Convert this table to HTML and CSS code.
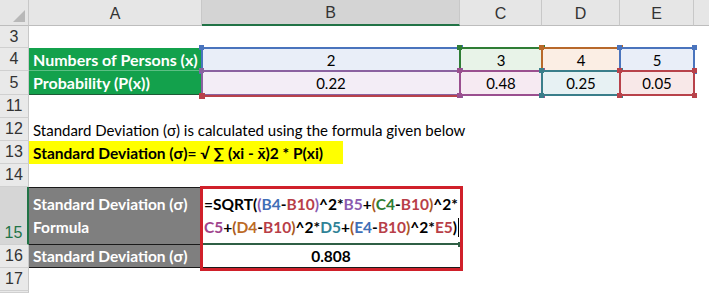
FILE: index.html
```html
<!DOCTYPE html>
<html>
<head>
<meta charset="utf-8">
<link rel="stylesheet" href="styles.css">
</head>
<body>
<div class="sheet">
  <div class="corner"><div class="tri"></div></div>
  <div class="ch">A</div>
  <div class="ch sel">B</div>
  <div class="ch">C</div>
  <div class="ch">D</div>
  <div class="ch">E</div>
  <div class="ch last"></div>

  <div class="rh">3</div>
  <div class="row-empty"></div>

  <div class="rh">4</div>
  <div class="cell green g4">Numbers of Persons (x)</div>
  <div class="cell ref r-b4">2<span class="frame"></span></div>
  <div class="cell ref r-c4">3<span class="frame"></span></div>
  <div class="cell ref r-d4">4<span class="frame"></span></div>
  <div class="cell ref r-e4">5<span class="frame"></span></div>
  <div class="cell"></div>

  <div class="rh">5</div>
  <div class="cell green g5">Probability (P(x))</div>
  <div class="cell ref r-b5">0.22<span class="frame"></span><span class="b10"></span></div>
  <div class="cell ref r-c5">0.48<span class="frame"></span></div>
  <div class="cell ref r-d5">0.25<span class="frame"></span></div>
  <div class="cell ref r-e5">0.05<span class="frame"></span></div>
  <div class="cell"></div>

  <div class="rh">11</div>
  <div class="row-empty"></div>

  <div class="rh">12</div>
  <div class="cell wide text12">Standard Deviation (σ) is calculated using the formula given below</div>

  <div class="rh">13</div>
  <div class="cell wide"><span class="yellow">Standard Deviation (σ)= √ ∑ (xi - x̄)2 * P(xi)</span></div>

  <div class="rh">14</div>
  <div class="row-empty"></div>

  <div class="rh sel r15">15</div>
  <div class="cell gray g15 r15">Standard Deviation (σ)<br>Formula</div>
  <div class="fbox">
    <div class="formula"><span class="k">=SQRT(</span><span class="pp">(</span><span class="cb">B4</span>-<span class="cr">B10</span><span class="pp">)</span>^2*<span class="cp">B5</span>+<span class="po">(</span><span class="cg">C4</span>-<span class="cr">B10</span><span class="po">)</span>^2*<br><span class="cm">C5</span>+<span class="po">(</span><span class="co">D4</span>-<span class="cr">B10</span><span class="po">)</span>^2*<span class="ct">D5</span>+<span class="po">(</span><span class="cb">E4</span>-<span class="cr">B10</span><span class="po">)</span>^2*<span class="cr">E5</span>)<span class="caret"></span><span class="handle"></span></div>
    <div class="result">0.808</div>
  </div>
  <div class="cell rest r15"></div>

  <div class="rh r16">16</div>
  <div class="cell gray g16 r16">Standard Deviation (σ)</div>
  <div class="cell rest r16"></div>

  <div class="rh r17">17</div>
  <div class="row-empty r17"></div>

  <div class="rh r18"></div>
  <div class="row-empty r18"></div>
</div>
</body>
</html>
```

FILE: styles.css
```css
html, body {
  margin: 0;
  padding: 0;
  background: #ffffff;
}
body {
  font-family: Lato, "Liberation Sans", "DejaVu Sans", sans-serif;
  font-size: 15px;
  color: #000;
  overflow: hidden;
}
.sheet {
  display: grid;
  grid-template-columns: 29px 173px 258px 82px 78px 74px 1fr;
  grid-template-rows: 26px 22px 23px 24px 23px 23px 23px 23px 58px 23px 23px 1fr;
  width: 709px;
  height: 293px;
}
.sheet > div {
  box-sizing: border-box;
  min-width: 0;
}
.r15 { grid-row: 9; }
.r16 { grid-row: 10; }
.r17 { grid-row: 11; }
.r18 { grid-row: 12; }
.rh.r15, .rh.r16, .rh.r17, .rh.r18 { grid-column: 1; }
.gray.r15, .gray.r16 { grid-column: 2; }
.rest { grid-column: 4 / -1; }
.corner {
  background: #e6e6e6;
  border-right: 1px solid #c8c8c8;
  border-bottom: 1px solid #bdbdbd;
  display: flex;
  justify-content: flex-end;
  align-items: flex-end;
  padding: 0 3px 3px 0;
}
.tri {
  width: 12px;
  height: 12px;
  background: #b8b8b8;
  clip-path: polygon(100% 0, 100% 100%, 0 100%);
}
.ch {
  background: #e6e6e6;
  border-right: 1px solid #c8c8c8;
  border-bottom: 1px solid #bdbdbd;
  display: flex;
  align-items: center;
  justify-content: center;
  color: #333;
  font-family: "Liberation Sans", sans-serif;
  font-size: 16px;
  padding-top: 2px;
}
.ch.sel {
  background: #d4d4d4;
  border-bottom: 2px solid #217346;
}
.ch.last { border-right: none; }
.rh {
  background: #e9e9e9;
  border-right: 1px solid #c8c8c8;
  border-bottom: 1px solid #d0d0d0;
  display: flex;
  align-items: center;
  justify-content: center;
  color: #333;
  font-family: "Liberation Sans", sans-serif;
  font-size: 16px;
}
.rh.sel {
  background: #d6d6d6;
  color: #217346;
  border-right: 2px solid #217346;
  align-items: flex-end;
  padding-bottom: 2px;
}
.row-empty {
  grid-column: 2 / -1;
}
.cell {
  display: flex;
  align-items: center;
  white-space: nowrap;
}
.wide {
  grid-column: 2 / -1;
}
.text12 {
  padding-left: 4px;
}
.yellow {
  display: flex;
  align-items: center;
  align-self: stretch;
  width: 314px;
  box-sizing: border-box;
  padding-left: 4px;
  background: #ffff00;
  font-weight: bold;
  font-size: 15.5px;
}
.green {
  background: #13a14c;
  color: #fff;
  font-weight: bold;
  font-size: 16px;
  padding-left: 4px;
}
.g4 { border-bottom: 1px solid #5cbf84; }
.g5 { border-bottom: 1px solid #1d5a36; }
.gray {
  background: #7f7f7f;
  color: #fff;
  font-weight: bold;
  font-size: 15.5px;
  padding-left: 4px;
  border-bottom: 1px solid #1a1a1a;
}
.g15 {
  border-top: 1px solid #1a1a1a;
  line-height: 23px;
  white-space: normal;
}
.ref {
  position: relative;
  justify-content: center;
  background: var(--f);
}
.frame {
  position: absolute;
  inset: -1px;
  border: 2px solid var(--c);
  pointer-events: none;
}
.frame::after {
  content: "";
  position: absolute;
  inset: -4px;
  background:
    linear-gradient(var(--c), var(--c)) left top / 5px 5px no-repeat,
    linear-gradient(var(--c), var(--c)) right top / 5px 5px no-repeat,
    linear-gradient(var(--c), var(--c)) left bottom / 5px 5px no-repeat,
    linear-gradient(var(--c), var(--c)) right bottom / 5px 5px no-repeat;
}
.b10 {
  position: absolute;
  left: -1px;
  right: -1px;
  bottom: -2px;
  height: 2px;
  background: #b8424a;
}
.b10::before {
  content: "";
  position: absolute;
  left: -2px;
  top: -2px;
  width: 6px;
  height: 6px;
  background: #b8424a;
}
.r-b4 { --c: #4a74bd; --f: #e9eef8; }
.r-b5 { --c: #8a62a0; --f: #f3edf6; }
.r-c4 { --c: #2f7d35; --f: #e8f3e8; }
.r-c5 { --c: #9a4f8f; --f: #f6eaf2; }
.r-d4 { --c: #b8692a; --f: #fbeee4; }
.r-d5 { --c: #3a7e8a; --f: #e7f1f3; }
.r-e4 { --c: #4a74bd; --f: #e9eef8; }
.r-e5 { --c: #b8424a; --f: #f8e8e8; }

.fbox {
  grid-column: 3;
  grid-row: 9 / span 2;
  position: relative;
  display: flex;
  flex-direction: column;
}
.fbox::after {
  content: "";
  position: absolute;
  top: -1px;
  left: -2px;
  right: -3px;
  bottom: -3px;
  border: 3px solid #d0202a;
  pointer-events: none;
}
.formula {
  position: relative;
  height: 58px;
  box-sizing: border-box;
  border-top: 1px solid #1a1a1a;
  border-bottom: 2px solid #2f5f45;
  padding-left: 2px;
  padding-top: 5px;
  font-weight: bold;
  font-size: 15.5px;
  line-height: 23px;
  white-space: nowrap;
}
.result {
  flex: 1;
  display: flex;
  align-items: center;
  justify-content: center;
  font-weight: bold;
  font-size: 15.5px;
  border-bottom: 1px solid #1a1a1a;
}
.handle {
  position: absolute;
  right: -3px;
  bottom: -4px;
  width: 5px;
  height: 5px;
  background: #2f5f45;
}
.caret {
  display: inline-block;
  width: 1px;
  height: 19px;
  background: #000;
  vertical-align: -4px;
  margin-left: 1px;
}
.cb { color: #3f6fb7; }
.cr { color: #b83e48; }
.cp { color: #8a5ab0; }
.cg { color: #2e7d32; }
.cm { color: #a0448c; }
.co { color: #bd6a25; }
.ct { color: #2f8296; }
.pp { color: #8a5ab0; }
.po { color: #a8591d; }
```
